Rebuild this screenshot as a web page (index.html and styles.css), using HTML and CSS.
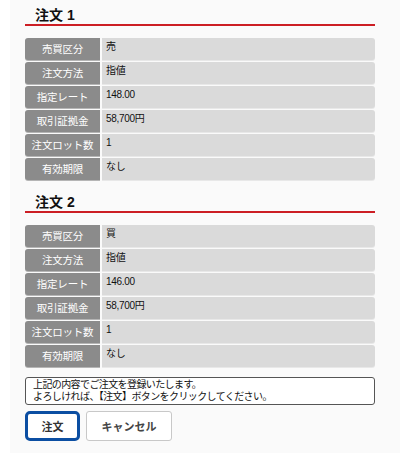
FILE: index.html
```html
<!DOCTYPE html>
<html lang="ja">
<head>
<meta charset="utf-8">
<link rel="stylesheet" href="styles.css">
</head>
<body>
<div class="page">
  <section class="order">
    <h2 class="order-title">注文 1</h2>
    <div class="rows">
      <div class="row"><div class="label">売買区分</div><div class="value">売</div></div>
      <div class="row"><div class="label">注文方法</div><div class="value">指値</div></div>
      <div class="row"><div class="label">指定レート</div><div class="value">148.00</div></div>
      <div class="row"><div class="label">取引証拠金</div><div class="value">58,700円</div></div>
      <div class="row"><div class="label">注文ロット数</div><div class="value">1</div></div>
      <div class="row"><div class="label">有効期限</div><div class="value">なし</div></div>
    </div>
  </section>
  <section class="order">
    <h2 class="order-title">注文 2</h2>
    <div class="rows">
      <div class="row"><div class="label">売買区分</div><div class="value">買</div></div>
      <div class="row"><div class="label">注文方法</div><div class="value">指値</div></div>
      <div class="row"><div class="label">指定レート</div><div class="value">146.00</div></div>
      <div class="row"><div class="label">取引証拠金</div><div class="value">58,700円</div></div>
      <div class="row"><div class="label">注文ロット数</div><div class="value">1</div></div>
      <div class="row"><div class="label">有効期限</div><div class="value">なし</div></div>
    </div>
  </section>
  <div class="message">上記の内容でご注文を登録いたします。<br>よろしければ、【注文】ボタンをクリックしてください。</div>
  <div class="actions">
    <button class="btn btn-primary">注文</button>
    <button class="btn btn-cancel">キャンセル</button>
  </div>
</div>
</body>
</html>
```

FILE: styles.css
```css
html, body {
  margin: 0;
  padding: 0;
  background: #ffffff;
}
body {
  font-family: "Liberation Sans", "Noto Sans CJK JP", sans-serif;
  color: #111;
}
.page {
  margin-left: 10px;
  background: #fafafa;
  min-height: 453px;
  box-sizing: border-box;
  padding: 7px 25px 0 15px;
}
.order + .order {
  margin-top: 14px;
}
.order-title {
  margin: 0;
  padding-left: 10px;
  font-size: 14px;
  line-height: 17px;
  font-weight: bold;
  color: #111;
  border-bottom: 2px solid #cc1e24;
  font-family: "Liberation Sans", "Noto Sans CJK JP", sans-serif;
}
.rows {
  margin-top: 12px;
  display: flex;
  flex-direction: column;
  gap: 2px;
}
.row {
  display: grid;
  grid-template-columns: 75px 1fr;
  column-gap: 2px;
  height: 22px;
}
.label {
  background: #8b8b8b;
  color: #fff;
  font-size: 10.5px;
  font-family: "Noto Sans CJK JP", sans-serif;
  text-align: center;
  line-height: 22px;
  border-radius: 3px 0 0 3px;
  letter-spacing: -0.2px;
  box-shadow: 0 1px 0 #b5b5b5;
}
.value {
  background: #dadada;
  font-size: 10px;
  line-height: 18px;
  padding-left: 4px;
  border-radius: 0 3px 3px 0;
  letter-spacing: -0.3px;
  box-shadow: 0 1px 0 #e8e8e8;
}
.message {
  margin-top: 10px;
  border: 1px solid #555;
  border-radius: 3px;
  background: #fff;
  font-size: 10px;
  line-height: 12px;
  padding: 1px 7px 0;
  height: 25px;
  box-sizing: content-box;
  font-family: "Liberation Sans", "Noto Sans CJK JP", sans-serif;
  letter-spacing: -0.6px;
  color: #111;
}
.actions {
  margin-top: 6px;
  display: flex;
  gap: 6px;
}
.btn {
  font-family: "Noto Sans CJK JP", sans-serif;
  font-size: 11px;
  font-weight: bold;
  color: #333;
  background: #fff;
  height: 30px;
  padding: 0;
  cursor: pointer;
}
.btn-primary {
  width: 55px;
  border: 3px solid #0b4ea2;
  border-radius: 5px;
}
.btn-cancel {
  width: 86px;
  border: 1px solid #c8c8c8;
  border-radius: 3px;
  color: #444;
}
```
